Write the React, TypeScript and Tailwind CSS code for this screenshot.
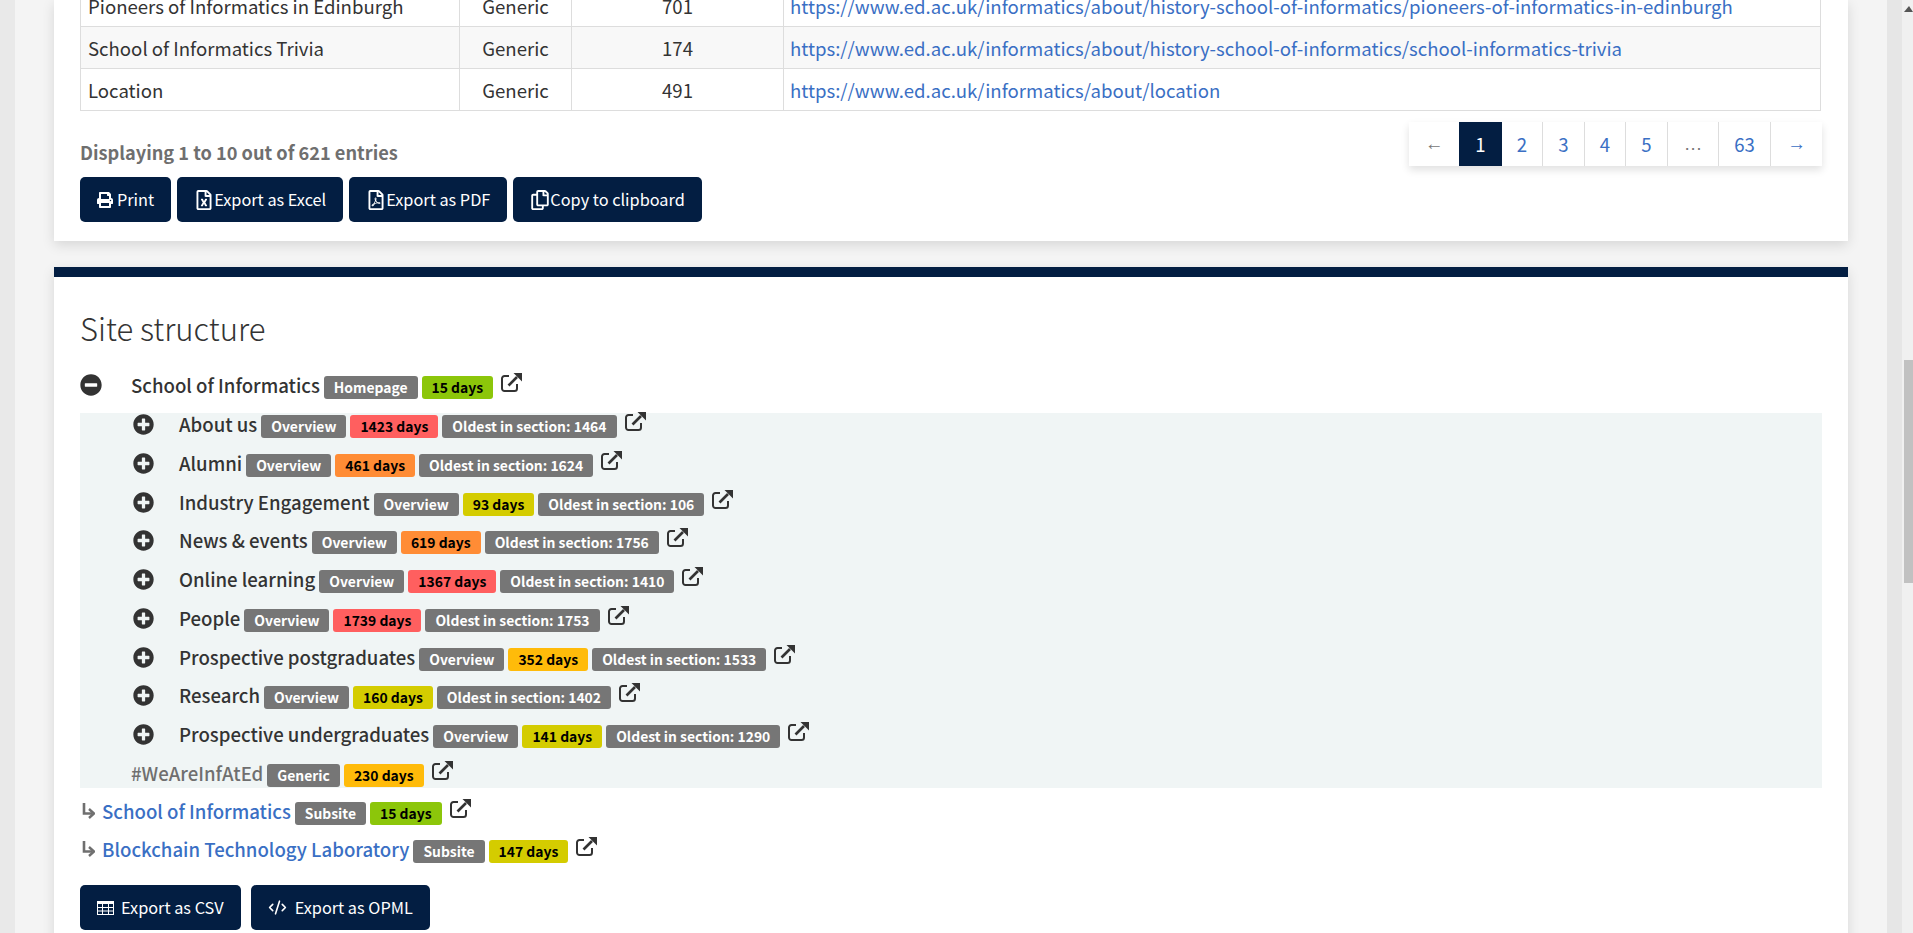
import type { ReactNode } from "react";
import { CodeXml } from "lucide-react";
import {
  FaMinusCircle,
  FaPlusCircle,
  FaPrint,
  FaRegCopy,
  FaRegFileExcel,
  FaRegFilePdf,
} from "react-icons/fa";

const sections = [
  { name: "About us", days: "1423 days", color: "bg-[#ff5f5f]", oldest: 1464 },
  { name: "Alumni", days: "461 days", color: "bg-[#ff8c35]", oldest: 1624 },
  { name: "Industry Engagement", days: "93 days", color: "bg-[#d4cc00]", oldest: 106 },
  { name: "News & events", days: "619 days", color: "bg-[#ff8c35]", oldest: 1756 },
  { name: "Online learning", days: "1367 days", color: "bg-[#ff5f5f]", oldest: 1410 },
  { name: "People", days: "1739 days", color: "bg-[#ff5f5f]", oldest: 1753 },
  { name: "Prospective postgraduates", days: "352 days", color: "bg-[#ffbb0a]", oldest: 1533 },
  { name: "Research", days: "160 days", color: "bg-[#d4cc00]", oldest: 1402 },
  { name: "Prospective undergraduates", days: "141 days", color: "bg-[#d4cc00]", oldest: 1290 },
];

const rows = [
  { title: "Pioneers of Informatics in Edinburgh", age: 701, url: "https://www.ed.ac.uk/informatics/about/history-school-of-informatics/pioneers-of-informatics-in-edinburgh" },
  { title: "School of Informatics Trivia", age: 174, url: "https://www.ed.ac.uk/informatics/about/history-school-of-informatics/school-informatics-trivia" },
  { title: "Location", age: 491, url: "https://www.ed.ac.uk/informatics/about/location" },
];

const pages = [
  { label: "←", cls: "w-[50px] text-[#767676] font-['Liberation_Sans']" },
  { label: "1", cls: "w-[43px] bg-[#031e42] text-white" },
  { label: "2", cls: "w-[41px] text-[#3a6fc4] border-r border-[#ddd]" },
  { label: "3", cls: "w-[42px] text-[#3a6fc4] border-r border-[#ddd]" },
  { label: "4", cls: "w-[41px] text-[#3a6fc4] border-r border-[#ddd]" },
  { label: "5", cls: "w-[42px] text-[#3a6fc4] border-r border-[#ddd]" },
  { label: "…", cls: "w-[51px] text-[#767676] border-r border-[#ddd] font-['Liberation_Sans']" },
  { label: "63", cls: "w-[52px] text-[#3a6fc4] border-r border-[#ddd]" },
  { label: "→", cls: "w-[51px] text-[#3a6fc4] font-['Liberation_Sans']" },
];

function Btn({ children, icon }: { children: ReactNode; icon: ReactNode }) {
  return (
    <button className="bg-[#031e42] h-[45px] rounded-[5px] px-[17px] text-white text-[16.3px] flex items-center">
      {icon}
      {children}
    </button>
  );
}

function Badge({ children, color }: { children: ReactNode; color?: string }) {
  return (
    <span
      className={
        "mt-[2px] ml-[4px] h-[23px] shrink-0 rounded-[3px] px-[10px] text-[13.9px] leading-[22px] font-bold " +
        (color ? color + " text-black" : "bg-[#767676] text-white")
      }
    >
      {children}
    </span>
  );
}

function Ext() {
  return (
    <svg viewBox="0 0 21 19" className="ml-[8px] -mt-[1px] w-[21px] h-[19px] shrink-0 text-[#333]">
      <path d="M8 3H3.500A2.500 2.500 0 0 0 1 5.500V15.500A2.500 2.500 0 0 0 3.500 18H13.500A2.500 2.500 0 0 0 16 15.500V11" fill="none" stroke="currentColor" strokeWidth="2" />
      <path d="M7.500 12.500L16 4" fill="none" stroke="currentColor" strokeWidth="2.600" />
      <path d="M12.500 0H21V8.500Z" fill="currentColor" />
    </svg>
  );
}

function TableIcon() {
  return (
    <svg viewBox="0 0 17 14" className="w-[17px] h-[14px] mr-[7px] shrink-0 text-white">
      <rect x="0.500" y="0.500" width="16" height="13" fill="none" stroke="currentColor" />
      <rect x="0" y="0" width="17" height="3" fill="currentColor" />
      <path d="M0 6.500H17M0 10H17M5.500 3V14M11.500 3V14" fill="none" stroke="currentColor" />
    </svg>
  );
}

function ChildArrow() {
  return (
    <svg viewBox="0 0 13 16" className="w-[13px] h-[16px] ml-[2px] mr-[7px] mt-[3px] shrink-0 text-[#6f6f6f]">
      <path d="M2 0V10.500H10" fill="none" stroke="currentColor" strokeWidth="2.600" />
      <path d="M7 6L12 10.500L7 15" fill="none" stroke="currentColor" strokeWidth="2.400" />
    </svg>
  );
}

export default function App() {
  return (
    <div className="h-[933px] overflow-hidden flex bg-[#e9e9e9] text-[#333] text-[18.6px] font-['Noto_Sans_CJK_SC','Liberation_Sans',sans-serif]">
      <div className="w-[1872px] ml-[15px] bg-[#f4f4f4] px-[39px] shrink-0">
        <div className="bg-white shadow-[0_4px_12px_rgba(0,0,0,0.12)] h-[241px] px-[26px] flex flex-col">
          <table className="w-[1741px] border-collapse table-fixed -mt-[16px]">
            <tbody>
              {rows.map((r, i) => (
                <tr key={r.title} className={"h-[42px] " + (i === 1 ? "bg-[#f8f8f8]" : "")}>
                  <td className="border border-[#ddd] px-[7px] w-[379px]">{r.title}</td>
                  <td className="border border-[#ddd] text-center w-[112px]">Generic</td>
                  <td className="border border-[#ddd] text-center w-[212px]">{r.age}</td>
                  <td className="border border-[#ddd] px-[6px] text-[#3a6fc4]">{r.url}</td>
                </tr>
              ))}
            </tbody>
          </table>
          <div className="flex justify-between">
            <div className="flex flex-col">
              <div className="mt-[29px] text-[#6f6f6f] font-semibold text-[18.2px] leading-[24px]">Displaying 1 to 10 out of 621 entries</div>
              <div className="flex gap-[6px] mt-[13px]">
                <Btn icon={<FaPrint size={16} className="mr-[4px]" />}>Print</Btn>
                <Btn icon={<FaRegFileExcel size={20} />}>Export as Excel</Btn>
                <Btn icon={<FaRegFilePdf size={20} />}>Export as PDF</Btn>
                <Btn icon={<FaRegCopy size={20} />}>Copy to clipboard</Btn>
              </div>
            </div>
            <div className="flex h-[44px] mt-[11px] shadow-[0_4px_8px_rgba(0,0,0,0.12)]">
              {pages.map((p) => (
                <div key={p.label} className={p.cls + " flex items-center justify-center"}>{p.label}</div>
              ))}
            </div>
          </div>
        </div>

        <div className="mt-[26px] bg-white border-t-[10px] border-[#031e42] h-[700px] px-[26px] shadow-[0_4px_12px_rgba(0,0,0,0.12)]">
          <h2 className="text-[31px] font-light leading-[40px] pt-[31px] h-[97px] text-[#333]">Site structure</h2>

          <div className="flex h-[23px] font-medium">
            <FaMinusCircle size={22} className="shrink-0 mr-[29px]" />
            <span className="leading-[22px]">School of Informatics</span>
            <Badge>Homepage</Badge>
            <Badge color="bg-[#8cc60a]">15 days</Badge>
            <Ext />
          </div>

          <div className="mt-[16px] bg-[#f0f5f5] flex flex-col gap-[15.75px] h-[375px]">
            {sections.map((s) => (
              <div key={s.name} className="flex h-[23px] pl-[53px] font-medium">
                <FaPlusCircle size={21} className="shrink-0 mr-[25px] mt-[1px]" />
                <span className="leading-[22px]">{s.name}</span>
                <Badge>Overview</Badge>
                <Badge color={s.color}>{s.days}</Badge>
                <Badge>Oldest in section: {s.oldest}</Badge>
                <Ext />
              </div>
            ))}
            <div className="flex h-[23px] pl-[51px] font-medium text-[#6f6f6f]">
              <span className="leading-[22px]">#WeAreInfAtEd</span>
              <Badge>Generic</Badge>
              <Badge color="bg-[#ffbb0a]">230 days</Badge>
              <Ext />
            </div>
          </div>

          <div className="mt-[12px] flex h-[23px] font-medium">
            <ChildArrow />
            <span className="leading-[22px] text-[#3a6fc4]">School of Informatics</span>
            <Badge>Subsite</Badge>
            <Badge color="bg-[#8cc60a]">15 days</Badge>
            <Ext />
          </div>
          <div className="mt-[15px] flex h-[23px] font-medium">
            <ChildArrow />
            <span className="leading-[22px] text-[#3a6fc4]">Blockchain Technology Laboratory</span>
            <Badge>Subsite</Badge>
            <Badge color="bg-[#d4cc00]">147 days</Badge>
            <Ext />
          </div>

          <div className="mt-[24px] flex gap-[10px]">
            <Btn icon={<TableIcon />}>Export as CSV</Btn>
            <Btn icon={<CodeXml size={19} className="mr-[8px]" />}>Export as OPML</Btn>
          </div>
        </div>
      </div>

      {/* browser scrollbar */}
      <div className="w-[15px] bg-[#e6e6e6] shrink-0" />
      <div className="flex-1 bg-[#f0f0f0] pl-[2px]">
        <svg viewBox="0 0 9 6" className="w-[9px] h-[6px] mt-[6px] mb-[348px] fill-[#555]">
          <path d="M5 0 L9 6 H0 Z" />
        </svg>
        <div className="h-[223px] bg-[#c1c1c1]" />
      </div>
    </div>
  );
}
